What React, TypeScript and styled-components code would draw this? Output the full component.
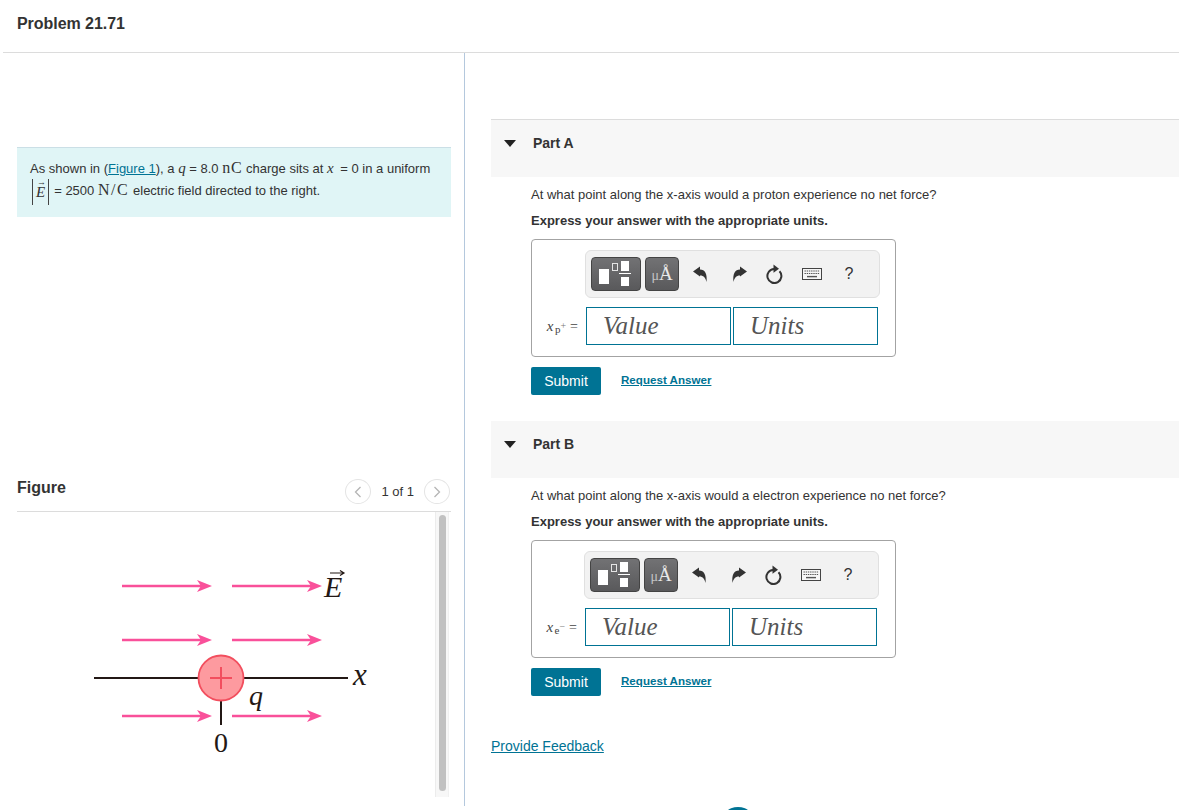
import React from 'react';
import styled, { createGlobalStyle } from 'styled-components';

const teal = '#007394';

const GlobalStyle = createGlobalStyle`
  html, body {
    margin: 0;
    padding: 0;
    height: 810px;
    overflow: hidden;
    background: #fff;
    color: #333;
    font-family: "Liberation Sans", Arial, sans-serif;
  }
  * {
    box-sizing: border-box;
  }
`;

const Page = styled.div`
  position: relative;
  width: 1179px;
  height: 810px;
  overflow: hidden;
`;

const Header = styled.header`
  display: flex;
  align-items: center;
  height: 53px;
  margin-left: 3px;
  padding: 0 0 5px 14px;
  border-bottom: 1px solid #dcdcdc;
`;

const Title = styled.h1`
  margin: 0;
  font-size: 16px;
  font-weight: 700;
  letter-spacing: -0.05px;
  color: #333;
`;

const Main = styled.main`
  display: flex;
  height: 753px;
`;

const LeftPane = styled.section`
  width: 465px;
  padding: 94px 13px 0 17px;
  border-right: 1px solid #b4c8dd;
`;

const Intro = styled.div`
  height: 70px;
  padding: 9px 13px 0;
  font-size: 13px;
  line-height: 22px;
  background: #e0f5f6;
  border-top: 1px solid #cbdfe6;
  white-space: nowrap;
`;

const IntroLine = styled.div`
  height: 22px;
`;

const Link = styled.a`
  color: ${teal};
  text-decoration: underline;
`;

const Rm = styled.span<{ $spread: number }>`
  font-family: "Liberation Serif", serif;
  font-size: 16px;
  letter-spacing: ${(p) => p.$spread}px;
`;

const It = styled.i<{ $spread?: number }>`
  font-family: "Liberation Serif", serif;
  font-size: 15px;
  letter-spacing: ${(p) => p.$spread ?? 0}px;
`;

const AbsValue = styled.span`
  position: relative;
  display: inline-block;
  height: 26px;
  margin: -4px 5px -4px 2px;
  padding: 0 3px;
  vertical-align: middle;
  line-height: 26px;
  border-left: 1px solid #444;
  border-right: 1px solid #444;
  font-family: "Liberation Serif", serif;
  font-size: 15px;
  font-style: italic;

  &::before {
    content: '→';
    position: absolute;
    top: -1px;
    left: 4px;
    line-height: 8px;
    font-size: 9px;
    font-style: normal;
  }
`;

const FigureSection = styled.div`
  margin-top: 255px;
`;

const FigureHeader = styled.div`
  display: flex;
  align-items: flex-start;
  justify-content: space-between;
  height: 40px;
  padding: 7px 1px 0 0;
  border-bottom: 1px solid #dcdcdc;
`;

const FigureTitle = styled.h2`
  margin: 0;
  font-size: 16px;
  line-height: 18px;
  font-weight: 700;
`;

const Pager = styled.div`
  display: flex;
  align-items: center;
  gap: 10px;
  font-size: 13px;
  color: #333;
`;

const PagerButton = styled.span`
  display: flex;
  align-items: center;
  justify-content: center;
  width: 26px;
  height: 25px;
  border: 1px solid #e4e4e4;
  border-radius: 50%;
  color: #b5b5b5;

  svg {
    display: block;
  }
`;

const FigureBody = styled.div`
  display: flex;
  height: 285px;
`;

const FigureCanvas = styled.div`
  flex: 1;
  min-width: 0;
`;

const ScrollTrack = styled.div`
  width: 14px;
  margin-right: 2px;
  padding: 3px 2px 6px 3px;
  background: #f7f7f7;
  border-left: 1px solid #ececec;
  border-right: 1px solid #f0f0f0;
`;

const ScrollThumb = styled.div`
  height: 100%;
  background: #c1c1c1;
  border-radius: 4px;
`;

const RightPane = styled.section`
  flex: 1;
  padding: 66px 0 0 26px;
`;

const PartHeader = styled.div<{ $ruled?: boolean }>`
  display: flex;
  align-items: center;
  gap: 17px;
  height: 57px;
  padding: 0 0 11px 13px;
  background: #f7f7f7;
  box-shadow: ${(p) => (p.$ruled ? '0 -1px 0 #dcdcdc' : 'none')};
  margin-top: ${(p) => (p.$ruled ? '1px' : '0')};
`;

const Caret = styled.span`
  width: 0;
  height: 0;
  border-left: 6px solid transparent;
  border-right: 6px solid transparent;
  border-top: 7px solid #222;
`;

const PartName = styled.h3`
  margin: 0;
  font-size: 14px;
  font-weight: 700;
  color: #333;
`;

const PartBody = styled.div`
  padding: 9px 0 26px 40px;
`;

const Question = styled.p`
  margin: 0;
  font-size: 13px;
  line-height: 17px;
`;

const Instruction = styled.p`
  margin: 9px 0 10px;
  font-size: 13px;
  line-height: 17px;
  font-weight: 700;
`;

const AnswerBox = styled.div<{ $indent: number }>`
  width: 365px;
  height: 118px;
  padding: 10px 0 0 ${(p) => p.$indent}px;
  border: 1px solid #a3a3a3;
  border-radius: 4px;
`;

const Toolbar = styled.div`
  display: flex;
  align-items: center;
  width: 295px;
  height: 48px;
  padding-left: 5px;
  background: #f2f2f2;
  border: 1px solid #e0e0e0;
  border-radius: 6px;
`;

const ToolButton = styled.div<{ $w: number }>`
  display: flex;
  align-items: center;
  justify-content: center;
  width: ${(p) => p.$w}px;
  height: 34px;
  margin-right: 4px;
  background: linear-gradient(#727274, #59595b);
  border: 1px solid #444;
  border-radius: 4px;
  color: #e8e8e8;
  font-family: "Liberation Serif", serif;
  font-size: 19px;

  svg {
    display: block;
  }
`;

const ToolIcon = styled.div<{ $w: number }>`
  display: flex;
  align-items: center;
  justify-content: center;
  width: ${(p) => p.$w}px;
  color: #333;
  font-size: 16px;
`;

const Micro = styled.span`
  color: #c4c4c4;
  font-size: 14px;
`;

const InputRow = styled.div<{ $indent: number }>`
  display: flex;
  align-items: center;
  gap: 2px;
  margin: 9px 0 0 ${(p) => -p.$indent}px;
  padding-left: 1px;
`;

const SymbolLabel = styled.span<{ $indent: number }>`
  width: ${(p) => p.$indent - 2}px;
  padding-right: 6px;
  text-align: right;
  white-space: nowrap;
  font-family: "Liberation Serif", serif;
  font-size: 14px;
  color: #444;

  i {
    font-size: 15px;
    letter-spacing: 1.5px;
  }
`;

const SubLetter = styled.span`
  position: relative;
  top: 2px;
  font-size: 11px;
`;

const SubSign = styled.span`
  position: relative;
  top: -2px;
  margin-right: 4px;
  font-size: 10px;
  color: #777;
`;

const FieldBox = styled.div`
  width: 145px;
  height: 38px;
  padding: 0 16px;
  line-height: 36px;
  border: 1px solid ${teal};
  font-family: "Liberation Serif", serif;
  font-size: 25px;
  font-style: italic;
  color: #555;
`;

const Actions = styled.div`
  display: flex;
  align-items: center;
  gap: 20px;
  margin-top: 10px;
`;

const SubmitButton = styled.button`
  width: 70px;
  height: 28px;
  padding: 0;
  background: ${teal};
  border: 0;
  border-radius: 2px;
  color: #fff;
  font-family: "Liberation Sans", Arial, sans-serif;
  font-size: 14px;
  font-weight: 500;
`;

const RequestLink = styled.a`
  margin-bottom: 4px;
  color: ${teal};
  font-size: 11.6px;
  font-weight: 700;
  text-decoration: underline;
`;

const Feedback = styled.a`
  display: block;
  margin-top: 16px;
  color: ${teal};
  font-size: 14px;
  text-decoration: underline;
`;

const FloatingDot = styled.div`
  position: absolute;
  left: 720px;
  bottom: -33px;
  width: 36px;
  height: 36px;
  background: ${teal};
  border-radius: 50%;
`;

const TemplateIcon = () => (
  <svg width="48" height="32" viewBox="1 1 48 32">
    <rect x="8" y="12" width="10" height="15" fill="#fff" />
    <rect x="21.5" y="6.5" width="5" height="7" fill="none" stroke="#e4e4e4" strokeWidth="1" />
    <rect x="30" y="4" width="8" height="10" fill="#fff" />
    <rect x="28" y="16" width="12" height="1" fill="#fff" />
    <rect x="30" y="20" width="8" height="9" fill="#fff" />
  </svg>
);

const UndoIcon = ({ flip }: { flip?: boolean }) => (
  <svg width="16" height="17" viewBox="0 0 16 17" style={flip ? { transform: 'scaleX(-1)' } : undefined}>
    <path d="M1 5.5 L8 0.5 V3.5 C13 3.5 15.5 8 14.5 16 C13.5 12 12 9.5 8 9.5 V10.5 Z" fill="#333" />
  </svg>
);

const ResetIcon = () => (
  <svg width="18" height="20" viewBox="0 0 18 20">
    <path d="M13.5 7.2 A7 7 0 1 1 8 5" fill="none" stroke="#333" strokeWidth="2" />
    <path d="M7.5 0.5 L13 4.8 L7.5 8.8 Z" fill="#333" />
  </svg>
);

const KeyboardIcon = () => (
  <svg width="20" height="12" viewBox="0 0 20 12">
    <rect x="0.5" y="0.5" width="19" height="11" fill="#f6f6f6" stroke="#444" />
    <path d="M2.5 3 H17.5 M2.5 5.5 H17.5" stroke="#555" strokeWidth="1.2" strokeDasharray="1.4 0.8" />
    <path d="M5 8.6 H15" stroke="#555" strokeWidth="1.4" />
  </svg>
);

const Chevron = ({ right }: { right?: boolean }) => (
  <svg width="8" height="12" viewBox="0 0 8 12">
    <path d={right ? 'M1.5 1 L6.5 6 L1.5 11' : 'M6.5 1 L1.5 6 L6.5 11'} fill="none" stroke="currentColor" strokeWidth="1.3" />
  </svg>
);

const FieldArrow = ({ x1, x2, y }: { x1: number; x2: number; y: number }) => (
  <g>
    <line x1={x1} y1={y} x2={x2 - 6} y2={y} stroke="#f9509a" strokeWidth="2.4" />
    <path d={`M${x2} ${y} L${x2 - 15} ${y - 6} L${x2 - 11} ${y} L${x2 - 15} ${y + 6} Z`} fill="#f9509a" />
  </g>
);

// drawn in page coordinates, the canvas starts at (17, 512)
const FieldFigure = () => (
  <svg width="418" height="285" viewBox="17 512 418 285" style={{ display: 'block' }}>
    <FieldArrow x1={122} x2={212} y={586} />
    <FieldArrow x1={232} x2={322} y={586} />
    <FieldArrow x1={122} x2={212} y={640} />
    <FieldArrow x1={232} x2={322} y={640} />
    <FieldArrow x1={122} x2={212} y={716} />
    <FieldArrow x1={232} x2={322} y={716} />
    <line x1={94} y1={678} x2={348} y2={678} stroke="#231815" strokeWidth="1.8" />
    <line x1={221} y1={700} x2={221} y2={725} stroke="#231815" strokeWidth="2" />
    <circle cx={221} cy={678} r={22.5} fill="#fd9a9f" stroke="#f24e5e" strokeWidth="1.8" />
    <path d="M210 678 H232 M221 667 V689" stroke="#f24e5e" strokeWidth="2" />
    <g fontFamily='"Liberation Serif", serif' fill="#231815">
      <text x={353} y={685} fontStyle="italic" fontSize="31">x</text>
      <text x={249} y={705} fontStyle="italic" fontSize="28">q</text>
      <text x={221} y={752} textAnchor="middle" fontSize="28">0</text>
      <text x={324} y={597} fontStyle="italic" fontSize="30">E</text>
    </g>
    <path d="M330 573 H343 M340 570.5 L344 573 L340 575.5" fill="none" stroke="#231815" strokeWidth="1.2" />
  </svg>
);

const Part = ({
  name,
  ruled,
  particle,
  letter,
  sign,
  indent,
}: {
  name: string;
  ruled?: boolean;
  particle: string;
  letter: string;
  sign: string;
  indent: number;
}) => (
  <>
    <PartHeader $ruled={ruled}>
      <Caret />
      <PartName>{name}</PartName>
    </PartHeader>
    <PartBody>
      <Question>At what point along the x-axis would a {particle} experience no net force?</Question>
      <Instruction>Express your answer with the appropriate units.</Instruction>
      <AnswerBox $indent={indent}>
        <Toolbar>
          <ToolButton $w={50}>
            <TemplateIcon />
          </ToolButton>
          <ToolButton $w={34}>
            <span>
              <Micro>μ</Micro>Å
            </span>
          </ToolButton>
          <ToolIcon $w={34}>
            <UndoIcon />
          </ToolIcon>
          <ToolIcon $w={46}>
            <UndoIcon flip />
          </ToolIcon>
          <ToolIcon $w={24}>
            <ResetIcon />
          </ToolIcon>
          <ToolIcon $w={50}>
            <KeyboardIcon />
          </ToolIcon>
          <ToolIcon $w={24}>?</ToolIcon>
        </Toolbar>
        <InputRow $indent={indent}>
          <SymbolLabel $indent={indent}>
            <i>x</i>
            <SubLetter>{letter}</SubLetter>
            <SubSign>{sign}</SubSign>=
          </SymbolLabel>
          <FieldBox>Value</FieldBox>
          <FieldBox>Units</FieldBox>
        </InputRow>
      </AnswerBox>
      <Actions>
        <SubmitButton>Submit</SubmitButton>
        <RequestLink href="#">Request Answer</RequestLink>
      </Actions>
    </PartBody>
  </>
);

const App = () => (
  <Page>
    <GlobalStyle />
    <Header>
      <Title>Problem 21.71</Title>
    </Header>
    <Main>
      <LeftPane>
        <Intro>
          <IntroLine>
            As shown in (<Link href="#">Figure 1</Link>), a <It>q</It> = 8.0 <Rm $spread={0.8}>nC</Rm> charge sits at{' '}
            <It $spread={3}>x</It> = 0 in a uniform
          </IntroLine>
          <IntroLine>
            <AbsValue>E</AbsValue>= 2500 <Rm $spread={1.6}>N/C</Rm> electric field directed to the right.
          </IntroLine>
        </Intro>
        <FigureSection>
          <FigureHeader>
            <FigureTitle>Figure</FigureTitle>
            <Pager>
              <PagerButton>
                <Chevron />
              </PagerButton>
              <span>1 of 1</span>
              <PagerButton>
                <Chevron right />
              </PagerButton>
            </Pager>
          </FigureHeader>
          <FigureBody>
            <FigureCanvas>
              <FieldFigure />
            </FigureCanvas>
            <ScrollTrack>
              <ScrollThumb />
            </ScrollTrack>
          </FigureBody>
        </FigureSection>
      </LeftPane>
      <RightPane>
        <Part name="Part A" ruled particle="proton" letter="p" sign="+" indent={53} />
        <Part name="Part B" particle="electron" letter="e" sign="−" indent={52} />
        <Feedback href="#">Provide Feedback</Feedback>
      </RightPane>
    </Main>
    <FloatingDot />
  </Page>
);

export default App;
